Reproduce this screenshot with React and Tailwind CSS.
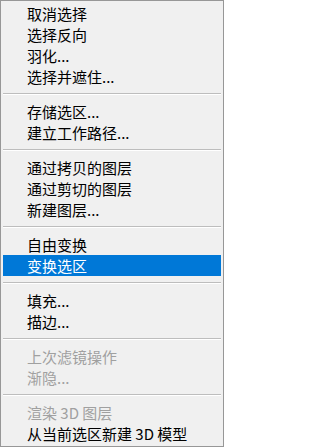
import React from "react";

const groups = [
    [
        { label: "取消选择" },
        { label: "选择反向" },
        { label: "羽化..." },
        { label: "选择并遮住..." },
    ],
    [
        { label: "存储选区..." },
        { label: "建立工作路径..." },
    ],
    [
        { label: "通过拷贝的图层" },
        { label: "通过剪切的图层" },
        { label: "新建图层..." },
    ],
    [
        { label: "自由变换" },
        { label: "变换选区", active: true },
    ],
    [
        { label: "填充..." },
        { label: "描边..." },
    ],
    [
        { label: "上次滤镜操作", disabled: true },
        { label: "渐隐...", disabled: true },
    ],
    [
        { label: "渲染 3D 图层", disabled: true },
        { label: "从当前选区新建 3D 模型" },
    ],
];

const MenuItem = ({ label, active, disabled }) => {
    let cls = "h-[21px] flex items-center pl-[24px] whitespace-nowrap";
    if (active) cls += " bg-[#0078d7] text-white";
    else if (disabled) cls += " text-[#a0a0a0]";
    else cls += " text-black";
    return <div className={cls}>{label}</div>;
};

const Separator = () => (
    <div className="h-[14px] flex flex-col justify-center">
        <div className="h-px bg-[#bdbdbd]" />
        <div className="h-px bg-white" />
    </div>
);

const App = () => {
    return (
        <div className="w-[224px] h-[447px] bg-[#f0f0f0] border border-[#979797] p-[2px] text-[15px] leading-none font-['Noto_Sans_CJK_SC',sans-serif]">
            {groups.map((items, gi) => (
                <div key={gi}>
                    {gi > 0 && <Separator />}
                    {items.map((item) => (
                        <MenuItem key={item.label} {...item} />
                    ))}
                </div>
            ))}
        </div>
    );
};

export default App;
